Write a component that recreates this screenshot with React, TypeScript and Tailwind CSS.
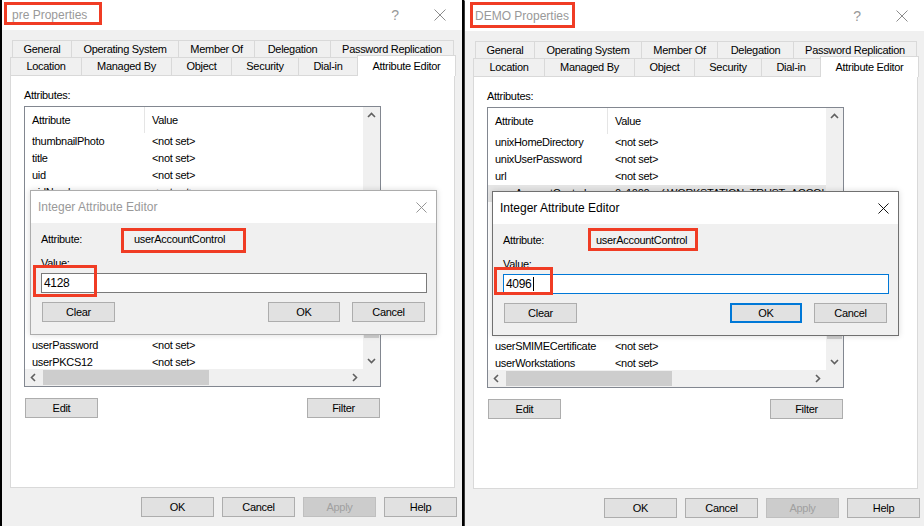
import React from "react";

type Row = [string, string];

const NS = "<not set>";

const LEFT_ROWS: Row[] = [
  ["thumbnailPhoto", NS],
  ["title", NS],
  ["uid", NS],
  ["uidNumber", NS],
  ["unicodePwd", NS],
  ["unixHomeDirectory", NS],
  ["unixUserPassword", NS],
  ["url", NS],
  ["userAccountControl", "0x1020 = ( PASSWD_NOTREQD | WORKSTATION_TRUST_ACCOUNT )"],
  ["userCert", NS],
  ["userCertificate", NS],
  ["userParameters", NS],
  ["userPassword", NS],
  ["userPKCS12", NS],
];

const RIGHT_ROWS: Row[] = [
  ["unixHomeDirectory", NS],
  ["unixUserPassword", NS],
  ["url", NS],
  ["userAccountControl", "0x1000 = ( WORKSTATION_TRUST_ACCOUNT )"],
  ["userCert", NS],
  ["userCertificate", NS],
  ["userParameters", NS],
  ["userPassword", NS],
  ["userPKCS12", NS],
  ["userPrincipalName", NS],
  ["userSharedFolder", NS],
  ["userSharedFolderOther", NS],
  ["userSMIMECertificate", NS],
  ["userWorkstations", NS],
];

const TABS_TOP = [
  ["General", "w-[60px]"],
  ["Operating System", "w-[108px]"],
  ["Member Of", "w-[77px]"],
  ["Delegation", "w-[77px]"],
  ["Password Replication", "w-[124px]"],
];

const TABS_BOTTOM = [
  ["Location", "w-[72px]"],
  ["Managed By", "w-[91px]"],
  ["Object", "w-[61px]"],
  ["Security", "w-[68px]"],
  ["Dial-in", "w-[60px]"],
];

function XIcon({ color, size }: { color: string; size: number }) {
  return (
    <svg width={size} height={size} viewBox="0 0 12 12">
      <path d="M0.5 0.5L11.5 11.5M11.5 0.5L0.5 11.5" stroke={color} strokeWidth="1" fill="none" />
    </svg>
  );
}

function Chevron({ d }: { d: "up" | "down" | "left" | "right" }) {
  const pts = {
    up: "1,6 4.5,2.5 8,6",
    down: "1,3 4.5,6.5 8,3",
    left: "6,1 2.5,4.5 6,8",
    right: "3,1 6.5,4.5 3,8",
  }[d];
  return (
    <svg width="9" height="9" viewBox="0 0 9 9">
      <polyline points={pts} fill="none" stroke="#606060" strokeWidth="1.6" />
    </svg>
  );
}

function Btn({
  children,
  className = "",
  w = "w-[73px]",
  disabled,
  focused,
}: {
  children: React.ReactNode;
  className?: string;
  w?: string;
  disabled?: boolean;
  focused?: boolean;
}) {
  const look = disabled
    ? "border border-[#bfbfbf] bg-[#cccccc] text-[#a0a0a0]"
    : focused
      ? "border-2 border-[#0078d7] bg-[#e1e1e1] text-black"
      : "border border-[#adadad] bg-[#e1e1e1] text-black";
  return <div className={`flex h-[20px] shrink-0 items-center justify-center ${w} ${look} ${className}`}>{children}</div>;
}

// red annotation rectangles drawn over the screenshot
function RedBox({ className }: { className: string }) {
  return <div className={`pointer-events-none absolute border-[3px] border-[#f03c24] ${className}`} />;
}

function AttrList({ rows, hiRow }: { rows: Row[]; hiRow?: number }) {
  return (
    <div className="flex h-[281px] w-[357px] flex-col border border-[#828790] bg-white">
      <div className="flex h-[262px]">
        <div className="w-[338px] overflow-hidden">
          <div className="flex h-[26px] items-center">
            <div className="flex h-full w-[120px] shrink-0 items-center border-r border-[#e5e5e5] pl-[7px]">Attribute</div>
            <div className="pl-[7px]">Value</div>
          </div>
          {rows.map(([a, v], i) => (
            <div
              key={a}
              className={`flex h-[17px] items-center whitespace-nowrap ${i === hiRow ? "bg-[#e5e5e5]" : ""}`}
            >
              <div className="w-[120px] shrink-0 pl-[7px]">{a}</div>
              <div className="pl-[7px]">{v}</div>
            </div>
          ))}
        </div>
        <div className="flex w-[17px] flex-col bg-[#f0f0f0]">
          <div className="flex h-[17px] items-center justify-center">
            <Chevron d="up" />
          </div>
          <div className="flex-1">
            <div className="mx-[1px] mt-[76px] h-[138px] bg-[#cdcdcd]" />
          </div>
          <div className="flex h-[17px] items-center justify-center">
            <Chevron d="down" />
          </div>
        </div>
      </div>
      <div className="flex h-[17px] bg-[#f0f0f0]">
        <div className="flex w-[338px] items-center">
          <div className="flex w-[17px] justify-center">
            <Chevron d="left" />
          </div>
          <div className="ml-[1px] h-[15px] w-[166px] bg-[#cdcdcd]" />
          <div className="ml-auto flex w-[17px] justify-center">
            <Chevron d="right" />
          </div>
        </div>
      </div>
    </div>
  );
}

function PropertiesWindow(p: {
  title: string;
  rows: Row[];
  hiRow?: number;
  value: string;
  active?: boolean;
  titleMark: string;
  uacMark: string;
  valueMark: string;
  dialogPos: string;
  className?: string;
}) {
  return (
    <div className={`relative h-[526px] w-[460px] shrink-0 overflow-hidden bg-[#f0f0f0] ${p.className ?? ""}`}>
      {/* title bar */}
      <div className="relative flex h-[30px] items-center bg-white">
        <span className="ml-[10px] text-[12px] tracking-normal text-[#999]">{p.title}</span>
        <span className="ml-auto flex w-[46px] justify-center text-[14px] text-[#999]">?</span>
        <span className="flex w-[44px] justify-center">
          <XIcon color="#8c8c8c" size={12} />
        </span>
        <RedBox className={p.titleMark} />
      </div>

      <div className="pl-[8px] pt-[10px]">
        {/* tabs */}
        <div className="ml-[2px] flex h-[17px]">
          {TABS_TOP.map(([t, w], i) => (
            <div
              key={t}
              className={`flex items-center justify-center border border-b-0 border-[#d9d9d9] ${w} ${i ? "-ml-px" : ""}`}
            >
              {t}
            </div>
          ))}
        </div>
        <div className="flex h-[18px] items-end">
          {TABS_BOTTOM.map(([t, w], i) => (
            <div
              key={t}
              className={`flex h-full items-center justify-center border border-b-0 border-[#d9d9d9] ${w} ${i ? "-ml-px" : ""}`}
            >
              {t}
            </div>
          ))}
          <div className="relative z-10 -mb-px -ml-px flex h-[21px] w-[99px] items-center justify-center border border-b-0 border-[#d9d9d9] bg-white">
            Attribute Editor
          </div>
        </div>

        {/* tab page */}
        <div className="h-[413px] w-[445px] border border-[#d9d9d9] bg-white pl-[13px] pt-[13px]">
          <div className="h-[13px] leading-[13px]">Attributes:</div>
          <div className="mt-[4px]">
            <AttrList rows={p.rows} hiRow={p.hiRow} />
          </div>
          <div className="mt-[11px] flex w-[357px] justify-between px-[1px]">
            <Btn>Edit</Btn>
            <Btn>Filter</Btn>
          </div>
        </div>

        <div className="mt-[9px] flex w-[447px] justify-end gap-[8px]">
          <Btn>OK</Btn>
          <Btn>Cancel</Btn>
          <Btn disabled>Apply</Btn>
          <Btn>Help</Btn>
        </div>
      </div>

      {/* Integer Attribute Editor dialog on top */}
      <div
        className={`absolute h-[145px] w-[407px] border bg-[#f0f0f0] shadow-[0_0_6px_rgba(0,0,0,0.15)] ${p.dialogPos} ${
          p.active ? "border-[#707070]" : "border-[#acacac]"
        }`}
      >
        <div className="flex h-[32px] items-center bg-white">
          <span className={`ml-[7px] text-[12px] tracking-normal ${p.active ? "text-black" : "text-[#999]"}`}>
            Integer Attribute Editor
          </span>
          <span className="ml-auto flex w-[30px] justify-center">
            <XIcon color={p.active ? "#000" : "#8c8c8c"} size={11} />
          </span>
        </div>
        <div className="pl-[10px]">
          <div className="mt-[9px] flex h-[14px] items-center">
            <span className="w-[93px]">Attribute:</span>
            <span>userAccountControl</span>
          </div>
          <div className="mt-[10px] flex h-[14px] items-center">Value:</div>
          <div
            className={`mt-[3px] flex h-[20px] w-[386px] items-center border bg-white pl-[2px] text-[12px] ${
              p.active ? "border-[#0078d7]" : "border-[#7a7a7a]"
            }`}
          >
            {p.value}
            {p.active && <span className="ml-px h-[14px] w-px bg-black" />}
          </div>
          <div className="mt-[9px] flex w-[386px]">
            <Btn className="ml-[1px]">Clear</Btn>
            <Btn className="ml-auto" w="w-[72px]" focused={p.active}>
              OK
            </Btn>
            <Btn className="ml-[12px] mr-[2px]">Cancel</Btn>
          </div>
        </div>
        <RedBox className={p.uacMark} />
        <RedBox className={p.valueMark} />
      </div>
    </div>
  );
}

export default function App() {
  return (
    <div className="flex h-[526px] w-[924px] overflow-hidden bg-black pl-[2px] font-['Liberation_Sans',Arial,sans-serif] text-[11px] tracking-[-0.3px] text-black">
      <PropertiesWindow
        title="pre Properties"
        rows={LEFT_ROWS}
        value="4128"
        titleMark="left-[2px] top-[2px] h-[23px] w-[98px]"
        uacMark="left-[90px] top-[37px] h-[25px] w-[125px]"
        valueMark="left-[2px] top-[74px] h-[32px] w-[64px]"
        dialogPos="left-[28px] top-[190px]"
      />
      <PropertiesWindow
        className="ml-[2px] border-l border-t border-l-[#3c3c3c] border-t-white"
        title="DEMO Properties"
        rows={RIGHT_ROWS}
        hiRow={3}
        value="4096"
        active
        titleMark="left-[5px] top-[1px] h-[26px] w-[105px]"
        uacMark="left-[95px] top-[36px] h-[23px] w-[110px]"
        valueMark="left-[1px] top-[75px] h-[28px] w-[59px]"
        dialogPos="left-[27px] top-[190px]"
      />
    </div>
  );
}
